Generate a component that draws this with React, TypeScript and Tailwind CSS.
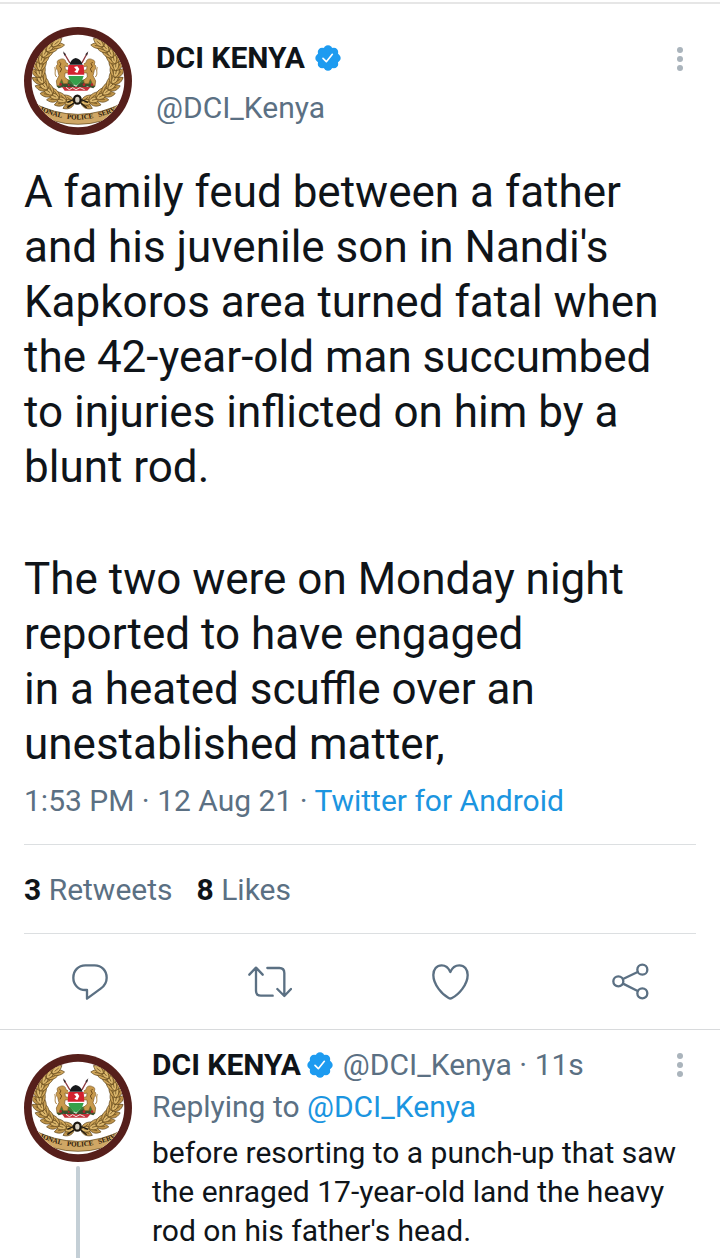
import type { ReactNode } from "react";

type Leaf = { x: number; y: number; angle: number; shade: string };

function buildWreath(): Leaf[] {
  const leaves: Leaf[] = [];
  const shades = ["#d0a65a", "#c0954a", "#dcb76c"];
  for (let i = 0; i < 12; i++) {
    const t = 1.66 + i * 0.21;
    const dx = -Math.sin(t) * 114;
    const dy = Math.cos(t) * 100;
    const heading = (Math.atan2(dy, dx) * 180) / Math.PI;
    [32, -32, 0].forEach((spread, k) => {
      leaves.push({
        x: 161 + Math.cos(t) * 114,
        y: 130 + Math.sin(t) * 97,
        angle: heading + spread,
        shade: shades[k],
      });
    });
  }
  return leaves;
}

const wreath = buildWreath();

function WreathSide() {
  return (
    <g stroke="#5f451a" strokeWidth="2">
      {wreath.map((leaf, i) => (
        <path
          key={i}
          d="M0 0C8 -11 24 -13 38 0C24 11 8 10 0 0ZM10 0H26"
          fill={leaf.shade}
          transform={`translate(${leaf.x} ${leaf.y}) rotate(${leaf.angle})`}
        />
      ))}
    </g>
  );
}

function Lion() {
  return (
    <g>
      <path
        d="M107 98C115 93 126 97 125 106L137 114L135 120L123 117L124 128L137 131L135 137L123 138L122 150L133 160L131 170H118L113 157L108 168L110 176H99L97 162L105 146L101 130C95 125 95 116 101 112C98 105 100 99 107 98Z"
        fill="#c8994b"
        stroke="#7d5822"
        strokeWidth="2"
      />
      <path d="M106 105L111 110L107 118L113 126L108 136" fill="none" stroke="#6c4a1d" strokeWidth="3" />
      <path d="M98 150C89 141 97 132 92 121" fill="none" stroke="#a67935" strokeWidth="3" />
    </g>
  );
}

function Avatar({ id }: { id: string }) {
  return (
    <svg viewBox="0 0 324 324" className="size-[108px] shrink-0" role="img" aria-label="DCI Kenya">
      <defs>
        <clipPath id={`${id}-disc`}>
          <circle cx="162" cy="162" r="139" />
        </clipPath>
        <path id={`${id}-ribbon`} d="M34 244Q162 311 290 244" />
      </defs>
      <circle cx="162" cy="162" r="162" fill="#561f1b" />
      <circle cx="162" cy="162" r="139" fill="#ffffff" />
      <g clipPath={`url(#${id}-disc)`}>
        <WreathSide />
        <g transform="translate(322 0) scale(-1 1)">
          <WreathSide />
        </g>
        <path d="M20 216Q162 306 304 216V228Q162 310 20 228Z" fill="#ffffff" />
        <path d="M20 224Q162 300 304 224L310 250Q162 334 14 250Z" fill="#cfa765" stroke="#5a4218" strokeWidth="2" />
        <text fontSize="21" fontWeight="700" fill="#2b1a0a" className="font-['Liberation_Serif',serif]">
          <textPath href={`#${id}-ribbon`} startOffset="50%" textAnchor="middle">
            {"IONAL\u00a0\u00a0\u00a0POLICE\u00a0\u00a0\u00a0SERV"}
          </textPath>
        </text>
      </g>
      <path d="M150 228L130 242M170 228L188 242M148 218L130 226M172 218L192 226" stroke="#1c1710" strokeWidth="4" />
      <ellipse cx="160" cy="218" rx="10" ry="12" fill="#d9d2c4" stroke="#1c1710" strokeWidth="7" />
      <path d="M120 78L146 122M190 78L166 122" stroke="#8c3a40" strokeWidth="4" />
      <path d="M117 73L126 82L121 86ZM193 73L184 82L189 86Z" fill="#3b3337" />
      <path d="M102 158Q128 150 156 166Q184 150 210 158L214 178Q156 168 98 178Z" fill="#3f7738" />
      <path d="M98 178L124 164L152 176L182 164L214 178L208 184L188 178V188H120V179L104 184Z" fill="#38502e" />
      <path d="M114 180H200L190 191H122Z" fill="#c4313b" />
      <path d="M126 181L136 188L146 182L156 188L168 182L182 188" fill="none" stroke="#f3e6e1" strokeWidth="3" />
      <Lion />
      <g transform="translate(312 0) scale(-1 1)">
        <Lion />
      </g>
      <path d="M133 108H179Q186 150 156 180Q126 150 133 108Z" fill="#ffffff" />
      <path d="M136 113Q142 95 155 93Q170 95 176 113Z" fill="#17191c" />
      <path d="M133 114H179L181 143H131Z" fill="#d3222f" />
      <path d="M133 147H179Q175 164 156 176Q136 164 133 147Z" fill="#36a04a" />
      <path d="M150 120L160 118L166 126L160 138L151 134L157 128Z" fill="#ffffff" />
      <g fill="#b3262d">
        <circle cx="110" cy="172" r="4" />
        <circle cx="134" cy="174" r="3" />
        <circle cx="180" cy="173" r="4" />
        <circle cx="204" cy="173" r="4" />
      </g>
    </svg>
  );
}

function VerifiedBadge() {
  return (
    <svg viewBox="0 0 78 78" className="size-[26px] shrink-0" role="img" aria-label="Verified account">
      <g fill="#1d9bf0">
        <circle cx="39" cy="39" r="33" />
        {[0, 45, 90, 135, 180, 225, 270, 315].map((deg) => (
          <circle key={deg} cx="39" cy="14" r="13" transform={`rotate(${deg} 39 39)`} />
        ))}
      </g>
      <path d="M24 40L34 50L52 28" fill="none" stroke="#ffffff" strokeWidth="5" strokeLinecap="round" strokeLinejoin="round" />
    </svg>
  );
}

function MoreButton() {
  return (
    <button type="button" aria-label="More options" className="flex h-7 w-8 items-center justify-center">
      <svg viewBox="0 0 6 26" className="h-[26px] w-[6px]" fill="#aab4bc">
        <circle cx="3" cy="4" r="3" />
        <circle cx="3" cy="13" r="3" />
        <circle cx="3" cy="22" r="3" />
      </svg>
    </button>
  );
}

function ActionButton({ label, children }: { label: string; children: ReactNode }) {
  return (
    <button type="button" aria-label={label} className="flex items-center justify-center">
      {children}
    </button>
  );
}

const stroke = {
  fill: "none",
  stroke: "#5b7083",
  strokeWidth: 7,
  strokeLinecap: "round",
  strokeLinejoin: "round",
} as const;

function Actions() {
  return (
    <div className="grid h-[95px] grid-cols-4">
      <ActionButton label="Reply">
        <svg viewBox="0 0 108 108" className="size-9" {...stroke}>
          <path d="M40 4H68C89 4 104 20 104 41C104 55 97 66 86 74L45 104V78H40C19 78 4 62 4 41C4 20 19 4 40 4Z" />
        </svg>
      </ActionButton>
      <ActionButton label="Retweet">
        <svg viewBox="0 0 132 96" className="h-8 w-11" {...stroke}>
          <path d="M4 26L24 5L44 26M24 6V74Q24 89 39 89H74M58 6H94Q109 6 109 21V89M88 69L109 90L129 69" />
        </svg>
      </ActionButton>
      <ActionButton label="Like">
        <svg viewBox="0 0 111 108" className="h-9 w-[37px]" {...stroke}>
          <path d="M55 24C49 10 40 4 29 4C14 4 4 16 4 33C4 62 31 92 50 102Q55 105 60 102C80 92 107 62 107 33C107 16 97 4 82 4C71 4 61 10 55 24Z" />
        </svg>
      </ActionButton>
      <ActionButton label="Share">
        <svg viewBox="0 0 111 111" className="size-[37px]" {...stroke}>
          <circle cx="19" cy="55" r="15" />
          <circle cx="91" cy="20" r="15" />
          <circle cx="91" cy="91" r="15" />
          <path d="M33 48L77 27M33 62L77 84" />
        </svg>
      </ActionButton>
    </div>
  );
}

export default function App() {
  return (
    <main className="min-h-screen bg-white pt-0.5 font-['Roboto',sans-serif] text-[#0f1419]">
      <article className="border-t-2 border-[#e6e6e6]">
        <div className="px-6 pt-[23px]">
          <header className="flex gap-6">
            <Avatar id="author" />
            <div className="min-w-0 flex-1 pt-[13px]">
              <div className="flex items-center gap-2.5">
                <span className="text-[30px] leading-9 font-bold">DCI KENYA</span>
                <VerifiedBadge />
              </div>
              <a href="#profile" className="mt-3.5 block text-[30px] leading-9 text-[#5b7083]">
                @DCI_Kenya
              </a>
            </div>
            <div className="pt-[18px]">
              <MoreButton />
            </div>
          </header>

          <div className="mt-[30px] text-[44px] leading-[55px]">
            <p>
              A family feud between a father
              <br />
              and his juvenile son in Nandi's
              <br />
              Kapkoros area turned fatal when
              <br />
              the 42-year-old man succumbed
              <br />
              to injuries inflicted on him by a
              <br />
              blunt rod.
            </p>
            <p className="mt-[57px]">
              The two were on Monday night
              <br />
              reported to have engaged
              <br />
              in a heated scuffle over an
              <br />
              unestablished matter,
            </p>
          </div>

          <p className="mt-[11px] text-[30px] leading-9 text-[#5b7083]">
            1:53 PM · 12 Aug 21 ·{" "}
            <a href="#source" className="text-[#1b95e0]">
              Twitter for Android
            </a>
          </p>

          <div className="mt-[25px] flex gap-6 border-y border-[#dcdfe1] pt-[27px] pb-[25px] text-[30px] leading-9 text-[#5b7083]">
            <span>
              <b className="text-[#0f1419]">3</b> Retweets
            </span>
            <span>
              <b className="text-[#0f1419]">8</b> Likes
            </span>
          </div>
        </div>
        <Actions />
      </article>

      <article className="flex gap-5 border-t border-[#d8dadc] px-6 pt-[21px]">
        <div className="flex flex-col items-center pt-[3px]">
          <Avatar id="reply" />
          <div className="mt-1 w-1 flex-1 rounded-t-full bg-[#c4cfd6]" />
        </div>
        <div className="min-w-0 flex-1 pb-2">
          <div className="flex items-center">
            <span className="text-[30px] leading-7 font-bold">DCI KENYA</span>
            <span className="mr-2.5 ml-1.5 flex">
              <VerifiedBadge />
            </span>
            <span className="flex-1 text-[30px] leading-7 text-[#5b7083]">@DCI_Kenya · 11s</span>
            <MoreButton />
          </div>
          <p className="mt-2.5 text-[30px] leading-9 text-[#5b7083]">
            Replying to{" "}
            <a href="#profile" className="text-[#1b95e0]">
              @DCI_Kenya
            </a>
          </p>
          <p className="mt-2 text-[30px] leading-[39px]">
            before resorting to a punch-up that saw
            <br />
            the enraged 17-year-old land the heavy
            <br />
            rod on his father's head.
          </p>
        </div>
      </article>
    </main>
  );
}
